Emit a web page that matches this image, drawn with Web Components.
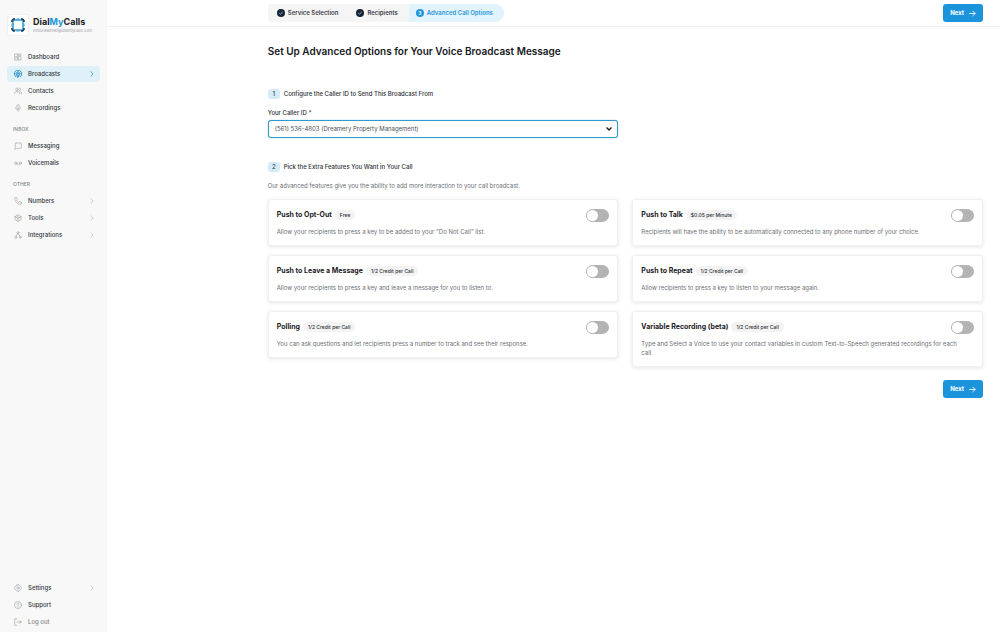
<!DOCTYPE html>
<html lang="en">
<head>
<meta charset="utf-8">
<title>DialMyCalls - Advanced Call Options</title>
<style>
  body {
    margin: 0;
    background: #fff;
    color: #2b2f35;
    font-family: Inter, "Liberation Sans", sans-serif;
    font-size: 6px;
    line-height: 8px;
  }
</style>
</head>
<body>
<app-shell>
  <side-bar slot="sidebar">
    <nav-item icon="dashboard">Dashboard</nav-item>
    <nav-item icon="broadcast" active arrow>Broadcasts</nav-item>
    <nav-item icon="contacts">Contacts</nav-item>
    <nav-item icon="mic">Recordings</nav-item>
    <nav-heading>INBOX</nav-heading>
    <nav-item icon="chat">Messaging</nav-item>
    <nav-item icon="voicemail">Voicemails</nav-item>
    <nav-heading>OTHER</nav-heading>
    <nav-item icon="phone" arrow>Numbers</nav-item>
    <nav-item icon="tools" arrow>Tools</nav-item>
    <nav-item icon="integrations" arrow>Integrations</nav-item>
    <nav-item slot="bottom" icon="settings" arrow>Settings</nav-item>
    <nav-item slot="bottom" icon="help">Support</nav-item>
    <nav-item slot="bottom" icon="logout" muted>Log out</nav-item>
  </side-bar>

  <step-trail slot="header">
    <step-item done>Service Selection</step-item>
    <step-item done>Recipients</step-item>
    <step-item current number="3">Advanced Call Options</step-item>
  </step-trail>
  <next-button slot="header">Next</next-button>

  <broadcast-options></broadcast-options>
</app-shell>

<script>
const ICONS = {
  dashboard: '<rect x="3" y="3" width="8" height="8"/><rect x="14" y="3" width="7" height="4"/><rect x="14" y="11" width="7" height="10"/><rect x="3" y="14" width="8" height="7"/>',
  broadcast: '<path d="M5 20a11 11 0 1 1 14 0M8 16a6 6 0 1 1 8 0"/><circle cx="12" cy="11" r="1.500"/><path d="M10.500 15.500h3l-.5 6h-2z"/>',
  contacts: '<circle cx="9" cy="7" r="4"/><path d="M1 21v-2a5 5 0 0 1 5-5h6a5 5 0 0 1 5 5v2M16 3a4 4 0 0 1 0 8M19 14a5 5 0 0 1 4 5v2"/>',
  mic: '<rect x="8.500" y="2" width="7" height="12" rx="3.500"/><path d="M5 10v1a7 7 0 0 0 14 0v-1M12 18v4"/>',
  chat: '<path d="M6 3h14a2 2 0 0 1 2 2v12a2 2 0 0 1-2 2H8l-6 3 2-5V5a2 2 0 0 1 2-2z"/>',
  voicemail: '<circle cx="5" cy="12" r="3.500"/><circle cx="19" cy="12" r="3.500"/><path d="M5 15.500h14"/>',
  phone: '<path d="M22 17v3a2 2 0 0 1-2 2A18 18 0 0 1 2 4a2 2 0 0 1 2-2h3a2 2 0 0 1 2 2l1 3a2 2 0 0 1-1 2l-1 1a15 15 0 0 0 6 6l1-1a2 2 0 0 1 2-1l3 1a2 2 0 0 1 2 2z"/>',
  tools: '<path d="M3 8l9-6 9 6M3 8l9 5 9-5M12 13v9M3 8v9l9 5 9-5V8M8 5l8 6"/>',
  integrations: '<circle cx="12" cy="5" r="3"/><circle cx="5" cy="19" r="3"/><circle cx="19" cy="19" r="3"/><path d="M11 8l-5 8M13 8l5 8"/>',
  settings: '<path d="M9 2h6l1 3 3 1 3 4v4l-3 4-3 1-1 3H9l-1-3-3-1-3-4v-4l3-4 3-1z"/><circle cx="12" cy="12" r="3.500"/>',
  help: '<circle cx="12" cy="12" r="10.500"/><path d="M9 9.500a3 3 0 1 1 4 3c-.7.400-1 .9-1 1.500M12 17v1"/>',
  logout: '<path d="M8 2H2v20h6M9 12h13M17 8l5 4-5 4"/>',
  chevron: '<path d="M8 3l8 9-8 9"/>',
  arrow: '<path d="M2 12h19M13 4l8 8-8 8"/>'
};

const RESET = `
  *, *::before, *::after { box-sizing: border-box; }
  a { color: inherit; text-decoration: none; }
  button, select, input { font: inherit; margin: 0; }
`;

// Base class: builds the shadow root from style() and html()
class BaseElement extends HTMLElement {
  constructor() {
    super();
    this.attachShadow({mode: "open"});
  }
  connectedCallback() {
    const template = document.createElement("template");
    template.innerHTML = `<style>${RESET}${this.style()}</style>${this.html()}`;
    this.shadowRoot.replaceChildren(template.content.cloneNode(true));
  }
  style() { return ""; }
  html() { return "<slot></slot>"; }
}

class AppIcon extends BaseElement {
  style() {
    return `
      :host { display: block; flex: none; width: 8px; height: 8px; }
      svg {
        display: block;
        width: 100%;
        height: 100%;
        fill: none;
        stroke: currentColor;
        stroke-width: var(--icon-stroke, 2);
        stroke-linecap: round;
        stroke-linejoin: round;
      }
    `;
  }
  html() {
    return `<svg viewBox="0 0 24 24" aria-hidden="true">${ICONS[this.getAttribute("name")]}</svg>`;
  }
}

class AppShell extends BaseElement {
  style() {
    return `
      :host {
        display: grid;
        grid-template-columns: 107px minmax(0, 1fr);
        min-height: 100vh;
      }
      .page { --gutter: 18%; }
      header {
        display: flex;
        align-items: center;
        justify-content: space-between;
        padding: 4px 17px 4px var(--gutter);
        border-bottom: 1px solid #f1f2f3;
      }
      main { padding: 17px 17px 24px var(--gutter); }
    `;
  }
  html() {
    return `
      <slot name="sidebar"></slot>
      <div class="page">
        <header><slot name="header"></slot></header>
        <main><slot></slot></main>
      </div>
    `;
  }
}

class SideBar extends BaseElement {
  style() {
    return `
      :host {
        display: flex;
        flex-direction: column;
        justify-content: space-between;
        padding: 13px 6px 2px 7px;
        background: #f8f8f8;
        border-right: 1px solid #f3f3f4;
      }
      .brand { display: flex; align-items: center; gap: 4px; height: 24px; margin-bottom: 12px; }
      .logo {
        display: grid;
        place-items: center;
        width: 22px;
        height: 22px;
        background: #fff;
        border: 1px solid #f0f0f1;
        border-radius: 3px;
      }
      .logo svg { width: 14px; height: 14px; }
      .name { font-size: 9px; line-height: 11px; font-weight: 700; color: #1b2026; }
      .name span { color: #2196dc; }
      .mail { font-size: 4px; line-height: 8px; color: #a3a6aa; }
      nav { display: flex; flex-direction: column; gap: 1px; }
    `;
  }
  html() {
    return `
      <div>
        <div class="brand">
          <div class="logo">
            <svg viewBox="0 0 28 28" fill="none" aria-hidden="true">
              <rect x="4" y="4" width="20" height="20" rx="2" stroke="#2a9bdc" stroke-width="3"/>
              <path d="M2 8V5l3-3h3M20 2h3l3 3v3M26 20v3l-3 3h-3M8 26H5l-3-3v-3" stroke="#1c3448" stroke-width="3"/>
              <path d="M2 11v6M26 11v6M11 2h6M11 26h6" stroke="#2a9bdc" stroke-width="2"/>
            </svg>
          </div>
          <div>
            <div class="name">Dial<span>My</span>Calls</div>
            <div class="mail">mmurawinski@dialmycalls.com</div>
          </div>
        </div>
        <nav aria-label="Main"><slot></slot></nav>
      </div>
      <nav aria-label="Account"><slot name="bottom"></slot></nav>
    `;
  }
}

class NavHeading extends BaseElement {
  style() {
    return `
      :host {
        display: block;
        padding: 8px 6px 4px;
        font-size: 5px;
        font-weight: 500;
        color: #85888c;
      }
    `;
  }
}

class NavItem extends BaseElement {
  style() {
    return `
      :host { display: block; }
      a {
        display: flex;
        align-items: center;
        gap: 6px;
        height: 16px;
        padding: 0 5px 0 7px;
        border-radius: 3px;
        font-weight: 500;
        color: #33383e;
      }
      .text { flex: 1; }
      app-icon { color: #a5a8ab; --icon-stroke: 2; }
      .chevron { width: 6px; height: 6px; }
      :host([active]) a { background: #dff0f8; }
      :host([active]) app-icon { color: #2791c9; --icon-stroke: 3; }
      :host([muted]) a { color: #85888c; }
    `;
  }
  html() {
    const arrow = this.hasAttribute("arrow") ? '<app-icon class="chevron" name="chevron"></app-icon>' : "";
    return `
      <a href="#"${this.hasAttribute("active") ? ' aria-current="page"' : ""}>
        <app-icon name="${this.getAttribute("icon")}"></app-icon>
        <span class="text"><slot></slot></span>
        ${arrow}
      </a>
    `;
  }
}

class StepTrail extends BaseElement {
  style() {
    return `
      :host {
        display: flex;
        height: 18px;
        overflow: hidden;
        background: #f5f5f6;
        border-radius: 3px 9px 9px 3px;
      }
    `;
  }
}

class StepItem extends BaseElement {
  style() {
    return `
      :host { display: flex; font-weight: 600; color: #3b4046; }
      :host(:first-child) { padding-left: 2px; }
      a { display: flex; align-items: center; gap: 3px; padding: 0 11px 0 7px; }
      .mark {
        display: grid;
        place-items: center;
        width: 8px;
        height: 8px;
        border-radius: 50%;
        background: #14253a;
        color: #fff;
        font-size: 5px;
      }
      svg { width: 6px; height: 6px; }
      :host([current]) { background: #e1f3fc; color: #2b97d8; }
      :host([current]) .mark { background: #2196dc; }
    `;
  }
  html() {
    const check = '<svg viewBox="0 0 10 10" fill="none" stroke="#fff" stroke-width="1" aria-hidden="true"><path d="M2 5l2 2 4-4"/></svg>';
    return `
      <a href="#"${this.hasAttribute("current") ? ' aria-current="step"' : ""}>
        <span class="mark">${this.getAttribute("number") || check}</span>
        <span><slot></slot></span>
      </a>
    `;
  }
}

class NextButton extends BaseElement {
  style() {
    return `
      :host { display: block; }
      button {
        display: flex;
        align-items: center;
        gap: 5px;
        height: 18px;
        padding: 0 7px;
        border: 0;
        border-radius: 3px;
        background: #1b94dc;
        color: #fff;
        font-weight: 700;
      }
      app-icon { width: 7px; height: 7px; --icon-stroke: 3; }
    `;
  }
  html() {
    return `<button type="button"><slot></slot><app-icon name="arrow"></app-icon></button>`;
  }
}

class StepHeading extends BaseElement {
  style() {
    return `
      :host { display: block; }
      h2 {
        display: flex;
        align-items: center;
        gap: 4px;
        margin: 0;
        font-size: 6px;
        line-height: 10px;
        font-weight: 500;
      }
      .number {
        width: 12px;
        border-radius: 3px;
        background: #d5ebf6;
        color: #23485f;
        text-align: center;
      }
    `;
  }
  html() {
    return `<h2><span class="number">${this.getAttribute("number")}</span><slot></slot></h2>`;
  }
}

class CallerSelect extends BaseElement {
  style() {
    return `
      :host { display: block; }
      label { display: block; margin-bottom: 3px; font-weight: 500; }
      .field { display: grid; align-items: center; }
      .field > * { grid-area: 1 / 1; }
      select {
        width: 100%;
        height: 18px;
        padding: 0 6px;
        appearance: none;
        background: #fff;
        border: 1px solid #2f9acb;
        border-radius: 3px;
        box-shadow: 0 0 1px #2f9acb;
        color: #4b5056;
      }
      svg {
        justify-self: end;
        width: 6px;
        height: 6px;
        margin-right: 6px;
        pointer-events: none;
      }
    `;
  }
  html() {
    return `
      <label for="caller">Your Caller ID *</label>
      <div class="field">
        <select id="caller">
          <option>(561) 536-4803 (Dreamery Property Management)</option>
        </select>
        <svg viewBox="0 0 12 12" fill="none" stroke="#22272d" stroke-width="3" aria-hidden="true"><path d="M1 3l5 5 5-5"/></svg>
      </div>
    `;
  }
}

class OptionCard extends BaseElement {
  style() {
    return `
      :host {
        display: block;
        padding: 8px;
        border: 1px solid #f0f0f1;
        border-radius: 3px;
        background: #fff;
        box-shadow: 0 1px 4px rgba(0, 0, 0, 0.1);
      }
      .top { display: flex; align-items: center; gap: 3px; height: 14px; }
      label { font-size: 7px; font-weight: 700; color: #1b2026; }
      .price {
        padding: 0 5px;
        border-radius: 5px;
        background: #f3f3f4;
        font-size: 5px;
        line-height: 10px;
        font-weight: 500;
      }
      input {
        display: flex;
        align-items: center;
        width: 23px;
        height: 13px;
        margin-left: auto;
        appearance: none;
        border: 1px solid #b3b3b3;
        border-radius: 7px;
        background: #b3b3b3;
      }
      input::before {
        content: "";
        width: 11px;
        height: 11px;
        border-radius: 50%;
        background: #fff;
      }
      input:checked { background: #1b94dc; border-color: #1b94dc; justify-content: flex-end; }
      p { margin: 5px 0 1px; padding-right: 6px; line-height: 9px; color: #6b6f74; }
    `;
  }
  html() {
    return `
      <div class="top">
        <label for="toggle">${this.getAttribute("name")}</label>
        <span class="price">${this.getAttribute("price")}</span>
        <input id="toggle" type="checkbox" role="switch">
      </div>
      <p><slot></slot></p>
    `;
  }
}

class BroadcastOptions extends BaseElement {
  style() {
    return `
      :host { display: block; }
      h1 { margin: 0 0 31px; font-size: 10px; line-height: 14px; font-weight: 600; color: #16191d; }
      .grid {
        display: grid;
        grid-template-columns: 1fr 1fr;
        align-items: start;
        gap: 9px 14px;
      }
      caller-select { margin: 10px 0 24px; }
      .intro { margin: 10px 0 9px; color: #6b6f74; }
      .actions { display: flex; justify-content: flex-end; margin-top: 13px; }
    `;
  }
  html() {
    return `
      <h1>Set Up Advanced Options for Your Voice Broadcast Message</h1>
      <step-heading number="1">Configure the Caller ID to Send This Broadcast From</step-heading>
      <div class="grid"><caller-select></caller-select></div>
      <step-heading number="2">Pick the Extra Features You Want in Your Call</step-heading>
      <p class="intro">Our advanced features give you the ability to add more interaction to your call broadcast.</p>
      <div class="grid">
        <option-card name="Push to Opt-Out" price="Free">Allow your recipients to press a key to be added to your "Do Not Call" list.</option-card>
        <option-card name="Push to Talk" price="$0.05 per Minute">Recipients will have the ability to be automatically connected to any phone number of your choice.</option-card>
        <option-card name="Push to Leave a Message" price="1/2 Credit per Call">Allow your recipients to press a key and leave a message for you to listen to.</option-card>
        <option-card name="Push to Repeat" price="1/2 Credit per Call">Allow recipients to press a key to listen to your message again.</option-card>
        <option-card name="Polling" price="1/2 Credit per Call">You can ask questions and let recipients press a number to track and see their response.</option-card>
        <option-card name="Variable Recording (beta)" price="1/2 Credit per Call">Type and Select a Voice to use your contact variables in custom Text-to-Speech generated recordings for each call.</option-card>
      </div>
      <div class="actions"><next-button>Next</next-button></div>
    `;
  }
}

customElements.define("app-icon", AppIcon);
customElements.define("app-shell", AppShell);
customElements.define("side-bar", SideBar);
customElements.define("nav-heading", NavHeading);
customElements.define("nav-item", NavItem);
customElements.define("step-trail", StepTrail);
customElements.define("step-item", StepItem);
customElements.define("next-button", NextButton);
customElements.define("step-heading", StepHeading);
customElements.define("caller-select", CallerSelect);
customElements.define("option-card", OptionCard);
customElements.define("broadcast-options", BroadcastOptions);
</script>
</body>
</html>
